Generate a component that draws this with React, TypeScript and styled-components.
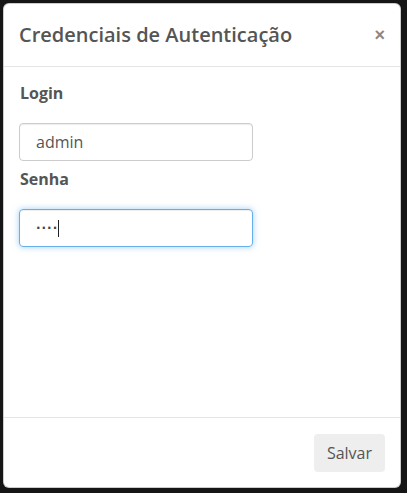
import * as React from 'react';
import styled, { createGlobalStyle } from 'styled-components';

const GlobalStyle = createGlobalStyle`
  html, body {
    margin: 0;
    padding: 0;
    background: #151515;
    font-family: "Open Sans", Lato, "Liberation Sans", sans-serif;
  }
`;

const Backdrop = styled.div`
  width: 407px;
  height: 493px;
  box-sizing: border-box;
  padding: 3px 6px 5px 3px;
  background: #151515;
`;

const Modal = styled.div`
  height: 100%;
  box-sizing: border-box;
  display: flex;
  flex-direction: column;
  background: #fff;
  border: 1px solid rgba(0, 0, 0, 0.2);
  border-radius: 6px;
`;

const Header = styled.div`
  display: flex;
  align-items: center;
  justify-content: space-between;
  padding: 15px;
  border-bottom: 1px solid #e5e5e5;
`;

const Title = styled.h4`
  margin: 0;
  font-size: 20px;
  line-height: 32px;
  font-weight: 600;
  color: #555;
`;

const Close = styled.button`
  border: none;
  background: transparent;
  padding: 0;
  font-family: "Liberation Sans", sans-serif;
  font-size: 18px;
  font-weight: 700;
  line-height: 1;
  color: #888;
  cursor: pointer;
`;

const Body = styled.div`
  flex: 1;
  padding: 15px;
`;

const Label = styled.label<{ first?: boolean }>`
  display: block;
  margin: ${({ first }) => (first ? '0' : '7px')} 0 19px 1px;
  font-size: 16px;
  line-height: 22px;
  font-weight: 700;
  color: #555;
`;

const Field = styled.div<{ focused?: boolean }>`
  display: flex;
  align-items: center;
  width: 234px;
  height: 38px;
  box-sizing: border-box;
  padding: 0 16px;
  border: 1px solid ${({ focused }) => (focused ? '#66afe9' : '#ccc')};
  border-radius: 4px;
  box-shadow: ${({ focused }) =>
    focused
      ? 'inset 0 1px 1px rgba(0,0,0,.075), 0 0 6px rgba(102,175,233,.6)'
      : 'inset 0 1px 1px rgba(0,0,0,.075)'};
  font-size: 16px;
  color: #555;
`;

const Dots = styled.span`
  font-family: "DejaVu Sans", sans-serif;
  font-size: 12px;
  font-weight: 700;
  letter-spacing: 1px;
  color: #444;
`;

const Caret = styled.span`
  display: inline-block;
  width: 1px;
  height: 17px;
  background: #222;
`;

const Footer = styled.div`
  display: flex;
  justify-content: flex-end;
  padding: 16px 15px 15px;
  border-top: 1px solid #e5e5e5;
`;

const Button = styled.button`
  height: 38px;
  padding: 0 13px;
  border: none;
  border-radius: 4px;
  background: #eee;
  font-family: "Open Sans", Lato, sans-serif;
  font-size: 16px;
  color: #555;
  cursor: pointer;
`;

export default function App() {
  return (
    <>
      <GlobalStyle />
      <Backdrop>
        <Modal>
          <Header>
            <Title>Credenciais de Autenticação</Title>
            <Close>×</Close>
          </Header>
          <Body>
            <Label first>Login</Label>
            <Field>admin</Field>
            <Label>Senha</Label>
            <Field focused>
              <Dots>····</Dots>
              <Caret />
            </Field>
          </Body>
          <Footer>
            <Button>Salvar</Button>
          </Footer>
        </Modal>
      </Backdrop>
    </>
  );
}
